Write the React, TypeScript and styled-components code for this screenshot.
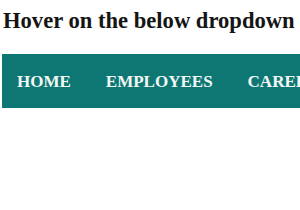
import React from 'react';
import styled, { createGlobalStyle } from 'styled-components';

const GlobalStyle = createGlobalStyle`
  html, body {
    margin: 0;
    padding: 0;
    background: #ffffff;
    font-family: "Liberation Serif", "Times New Roman", serif;
  }
`;

const Page = styled.div`
  padding: 9px 0 0 2px;
  overflow: hidden;
  width: 300px;
`;

const Heading = styled.h2`
  margin: 0 0 0 1px;
  font-size: 22.6px;
  font-weight: bold;
  color: #151515;
  white-space: nowrap;
  line-height: 24px;
`;

const NavBar = styled.ul`
  list-style: none;
  margin: 21px 0 0;
  padding: 0 0 0 15px;
  display: flex;
  gap: 35px;
  height: 54px;
  background: #0e7773;
  white-space: nowrap;
`;

const NavItem = styled.li`
  display: flex;
  align-items: center;
  padding-top: 1px;
`;

const NavLink = styled.a`
  color: #f2f7f6;
  font-size: 17px;
  font-weight: bold;
  text-decoration: none;
  cursor: pointer;
`;

const items = ['HOME', 'EMPLOYEES', 'CAREERS', 'CONTACT'];

const App = () => (
  <>
    <GlobalStyle />
    <Page>
      <Heading>Hover on the below dropdown</Heading>
      <NavBar>
        {items.map((item) => (
          <NavItem key={item}>
            <NavLink>{item}</NavLink>
          </NavItem>
        ))}
      </NavBar>
    </Page>
  </>
);

export default App;
